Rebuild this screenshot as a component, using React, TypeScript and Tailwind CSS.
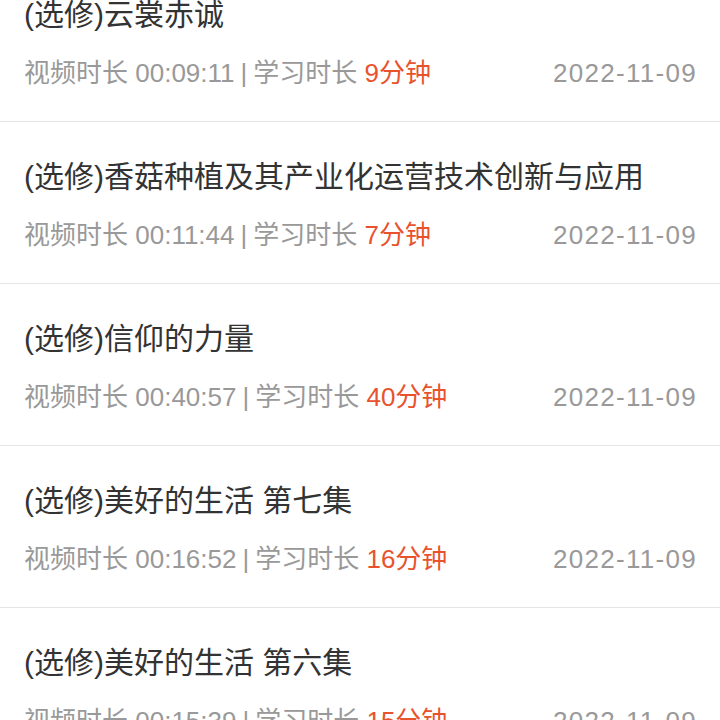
const courses = [
  { title: '(选修)云裳赤诚', video: '00:09:11', study: '9分钟', date: '2022-11-09' },
  { title: '(选修)香菇种植及其产业化运营技术创新与应用', video: '00:11:44', study: '7分钟', date: '2022-11-09' },
  { title: '(选修)信仰的力量', video: '00:40:57', study: '40分钟', date: '2022-11-09' },
  { title: '(选修)美好的生活 第七集', video: '00:16:52', study: '16分钟', date: '2022-11-09' },
  { title: '(选修)美好的生活 第六集', video: '00:15:39', study: '15分钟', date: '2022-11-09' },
];

export default function App() {
  return (
    <div
      className="w-[720px] h-[720px] overflow-hidden bg-white"
      style={{ fontFamily: '"Liberation Sans", "Noto Sans CJK SC", sans-serif' }}
    >
      <div className="-mt-[40px]">
        {courses.map((c, i) => (
          <div key={i} className="border-b border-[#e5e5e5] px-6 pt-[34px] pb-[30px]">
            <div className="text-[30px] leading-[42px] text-[#333] whitespace-nowrap">{c.title}</div>
            <div className="mt-[19px] flex items-center justify-between text-[26px] leading-[36px] text-[#999]">
              <div className="whitespace-nowrap">
                视频时长 {c.video}
                <span className="mx-[6px]">|</span>
                学习时长 <span className="text-[#e8532e]">{c.study}</span>
              </div>
              <div className="tracking-[1.3px] -mr-[1px]">{c.date}</div>
            </div>
          </div>
        ))}
      </div>
    </div>
  );
}
